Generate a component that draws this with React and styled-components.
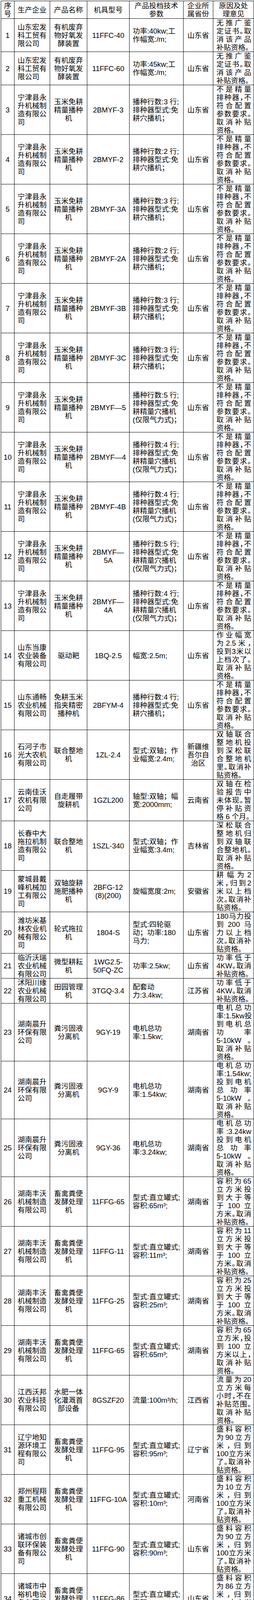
import React from "react";
import styled, { createGlobalStyle } from "styled-components";

const GlobalStyle = createGlobalStyle`
  html, body {
    margin: 0;
    padding: 0;
    background: #fff;
    overflow-x: hidden;
  }
  body {
    font-family: "Liberation Sans", "Noto Sans CJK SC", sans-serif;
    color: #000;
  }
`;

const Page = styled.div`
  width: 649px;
  padding: 2px 0 0 2px;
  box-sizing: border-box;
  overflow: hidden;
`;

const Table = styled.table`
  width: 646px;
  border-collapse: collapse;
  table-layout: fixed;
  font-size: 18.5px;
  line-height: 21px;
`;

const Head = styled.th`
  border: 1px solid #000;
  padding: 1px 0;
  font-weight: 400;
  text-align: center;
  vertical-align: middle;
  white-space: nowrap;
  overflow: hidden;
`;

const Cell = styled.td`
  border: 1px solid #000;
  padding: 0;
  vertical-align: middle;
  white-space: nowrap;
  overflow: hidden;
`;

const NumCell = styled(Cell)`
  text-align: center;
`;

const CompanyCell = styled(Cell)`
  text-align: left;
  padding: 0 4px 0 8px;
`;

const ProductCell = styled(Cell)`
  text-align: center;
`;

const ModelCell = styled(Cell)`
  text-align: center;
  padding: 0 2px;
`;

const ParamCell = styled(Cell)`
  text-align: left;
  padding: 0 4px 0 8px;
`;

const ProvinceCell = styled(Cell)`
  text-align: center;
`;

const ReasonCell = styled(Cell)`
  padding: 0 6px 0 8px;
  font-feature-settings: "halt";
`;

const Spread = styled.div`
  display: flex;
  justify-content: space-between;
`;

const Tail = styled.div`
  text-align: left;
`;

const NJ = ["宁津县永", "升机械制", "造有限公", "司"];
const CORN = ["玉米免耕", "精量播种", "机"];
const NOT_PRECISE = ["不是精量", "排种器，不", "符合配置", "参数要求。", "取消补贴", "资格。"];
const NO_CERT = ["无推广鉴", "定证书。取", "消该产品", "补贴资格。"];
const HN_CS = ["湖南晨升", "环保有限", "公司"];
const HN_FW = ["湖南丰沃", "机械制造", "有限公司"];
const FERM = ["畜禽粪便", "发酵处理", "机"];
const JBY = ["山东金碧", "源环保科", "技有限公", "司"];
const SMART = ["智能高温", "好氧发酵", "设备"];

const seed = (n) => [`播种行数:${n} 行;`, "排种器型式:免", "耕穴播机；"];
const seedAir = (n) => [`播种行数:${n} 行;`, "排种器型式:免", "耕精量穴播机", "(仅限气力式)；"];
const tank = (v) => ["型式:直立罐式;", `容积:${v}m³;`];
const tankReason = (v) => [`容积为 ${v}`, "立方米投", "到大于等", "于 100 立", "方米。取消", "补贴资格。"];
const boxReason = (v, sep = "。") => ["盛料容积", `为 ${v} 立方`, "米， 归到", "100立方米", `了${sep}取消补`, "贴资格。"];
const jbyReason = (v) => ["直立罐式；", "容积：为", `${v}m3， 投`, "到容积为", "100立方米", "档次，取消", "补贴资格。"];

const rows = [
  { company: ["山东宏发", "科工贸有", "限公司"], product: ["有机废弃", "物好氧发", "酵装置"], model: ["11FFC-40"], param: ["功率:40kw;工", "作幅宽:/m;"], province: ["山东省"], reason: NO_CERT },
  { company: ["山东宏发", "科工贸有", "限公司"], product: ["有机废弃", "物好氧发", "酵装置"], model: ["11FFC-60"], param: ["功率:45kw;工", "作幅宽:/m;"], province: ["山东省"], reason: NO_CERT },
  { company: NJ, product: CORN, model: ["2BMYF-3"], param: seed(3), province: ["山东省"], reason: NOT_PRECISE },
  { company: NJ, product: CORN, model: ["2BMYF-2"], param: seed(2), province: ["山东省"], reason: NOT_PRECISE },
  { company: NJ, product: CORN, model: ["2BMYF-3A"], param: seed(3), province: ["山东省"], reason: NOT_PRECISE },
  { company: NJ, product: CORN, model: ["2BMYF-2A"], param: seed(2), province: ["山东省"], reason: NOT_PRECISE },
  { company: NJ, product: CORN, model: ["2BMYF-3B"], param: seed(3), province: ["山东省"], reason: NOT_PRECISE },
  { company: NJ, product: CORN, model: ["2BMYF-3C"], param: seed(3), province: ["山东省"], reason: NOT_PRECISE },
  { company: NJ, product: CORN, model: ["2BMYF—5"], param: seedAir(5), province: ["山东省"], reason: NOT_PRECISE },
  { company: NJ, product: CORN, model: ["2BMYF—4"], param: seedAir(4), province: ["山东省"], reason: NOT_PRECISE },
  { company: NJ, product: CORN, model: ["2BMYF-4B"], param: seedAir(4), province: ["山东省"], reason: NOT_PRECISE },
  { company: NJ, product: CORN, model: ["2BMYF—", "5A"], param: seedAir(5), province: ["山东省"], reason: NOT_PRECISE },
  { company: NJ, product: CORN, model: ["2BMYF—", "4A"], param: seedAir(4), province: ["山东省"], reason: NOT_PRECISE },
  { company: ["山东当康", "农业装备", "有限公司"], product: ["驱动耙"], model: ["1BQ-2.5"], param: ["幅宽:2.5m;"], province: ["山东省"], reason: ["作业幅宽", "为 2.5 米，", "投到3米以", "上档次了。", "取消补贴", "资格。"] },
  { company: ["山东通畅", "农业机械", "有限公司"], product: ["免耕玉米", "指夹精密", "播种机"], model: ["2BFYM-4"], param: seed(4), province: ["山东省"], reason: NOT_PRECISE },
  { company: ["石河子市", "光大农机", "有限公司"], product: ["联合整地", "机"], model: ["1ZL-2.4"], param: ["型式:双轴；作", "业幅宽:2.4m;"], province: ["新疆维", "吾尔自", "治区"], reason: ["双轴联合", "整地机投", "到深松联", "合整地机", "里。取消补", "贴资格。"] },
  { company: ["云南佳沃", "农机有限", "公司"], product: ["自走履带", "旋耕机"], model: ["1GZL200"], param: ["轴型:双轴；幅", "宽:2000mm;"], province: ["云南省"], reason: ["双轴在检", "验报告中", "未体现。暂", "停补贴资", "格 6 个月。"] },
  { company: ["长春中大", "拖拉机制", "造有限公", "司"], product: ["联合整地", "机"], model: ["1SZL-340"], param: ["型式:双轴；作", "业幅宽:3.4m;"], province: ["吉林省"], reason: ["深松联合", "整地机归", "到双轴联", "合整地机。", "取消补贴", "资格。"] },
  { company: ["蒙城县戴", "峰机械加", "工有限公", "司"], product: ["双轴旋耕", "施肥播种", "机"], model: ["2BFG-12", "(8)(200)"], param: ["旋幅宽度:2m;"], province: ["安徽省"], reason: ["耕幅为 2", "米，归到 2", "米以上档", "次。取消补", "贴资格。"] },
  { company: ["潍坊米基", "林农业机", "械有限公", "司"], product: ["轮式拖拉", "机"], model: ["1804-S"], param: ["型式:四轮驱", "动；功率:180", "马力;"], province: ["山东省"], reason: ["180马力投", "到 200 马", "力以上档", "次。取消补", "贴资格。"] },
  { company: ["临沂沃瑞", "农业机械", "有限公司"], product: ["微型耕耘", "机"], model: ["1WG2.5-", "50FQ-ZC"], param: ["功率:2.5kw;"], province: ["山东省"], reason: ["功率低于", "4KW。取消", "补贴资格。"] },
  { company: ["沭阳川缘", "农业机械", "有限公司"], product: ["田园管理", "机"], model: ["3TGQ-3.4"], param: ["配套动", "力:3.4kw;"], province: ["江苏省"], reason: ["功率低于", "4KW。取消", "补贴资格。"] },
  { company: HN_CS, product: ["粪污固液", "分离机"], model: ["9GY-19"], param: ["电机总功", "率:1.5kw;"], province: ["湖南省"], reason: ["电机总功", "率:1.5kw投", "到电机总", "功率", "5-10kW 。", "取消补贴", "资格。"] },
  { company: HN_CS, product: ["粪污固液", "分离机"], model: ["9GY-9"], param: ["电机总功", "率:1.54kw;"], province: ["湖南省"], reason: ["电机总功", "率 :1.54kw;", "投到电机", "总功率", "5-10kW 。", "取消补贴", "资格。"] },
  { company: HN_CS, product: ["粪污固液", "分离机"], model: ["9GY-36"], param: ["电机总功", "率:3.24kw;"], province: ["湖南省"], reason: ["电机总功", "率 :3.24kw", "投到电机", "总功率", "5-10kW 。", "取消补贴", "资格。"] },
  { company: HN_FW, product: FERM, model: ["11FFG-65"], param: tank(65), province: ["湖南省"], reason: tankReason(65) },
  { company: HN_FW, product: FERM, model: ["11FFG-11"], param: tank(11), province: ["湖南省"], reason: tankReason(11) },
  { company: HN_FW, product: FERM, model: ["11FFG-25"], param: tank(25), province: ["湖南省"], reason: tankReason(25) },
  { company: HN_FW, product: FERM, model: ["11FFG-65"], param: tank(65), province: ["湖南省"], reason: ["容积为 65", "立方米，投", "到 100 立", "方米以上，", "取消补贴", "资格。"] },
  { company: ["江西沃邦", "农业科技", "有限公司"], product: ["水肥一体", "化灌溉首", "部设备"], model: ["8GSZF20"], param: ["流量:100m³/h;"], province: ["江西省"], reason: ["流量为 20", "立方米每", "小时，不在", "补贴范围。", "取消补贴", "资格。"] },
  { company: ["辽宁地知", "源环境工", "程有限公", "司"], product: FERM, model: ["11FFG-95"], param: tank(95), province: ["辽宁省"], reason: boxReason(90) },
  { company: ["郑州程翔", "重工机械", "有限公司"], product: FERM, model: ["11FFG-10A"], param: tank(10), province: ["河南省"], reason: boxReason(10) },
  { company: ["诸城市创", "联环保装", "备有限公", "司"], product: FERM, model: ["11FFG-90"], param: tank(90), province: ["山东省"], reason: boxReason(90) },
  { company: ["诸城市中", "裕机电设", "备有限公", "司"], product: FERM, model: ["11FFG-86"], param: tank(86), province: ["山东省"], reason: boxReason(86, "，") },
  { company: JBY, product: SMART, model: ["11FFG-32"], param: tank(32), province: ["山东省"], reason: ["直立罐式；", "容积:32m3", "投到容积", "100立方米", "档次，取消", "补贴资格。"] },
  { company: JBY, product: SMART, model: ["11FFG-89"], param: tank(89), province: ["山东省"], reason: jbyReason(89) },
  { company: JBY, product: SMART, model: ["11FFG-70"], param: tank(70), province: ["山东省"], reason: jbyReason(70) },
];

function Lines({ lines }) {
  return lines.map((line, i) => (
    <React.Fragment key={i}>
      {i > 0 && <br />}
      {line}
    </React.Fragment>
  ));
}

const tokens = (text) => text.match(/[!-~³]+|\S/g) || [];

function Reason({ lines }) {
  return lines.map((line, i) =>
    i < lines.length - 1 ? (
      <Spread key={i}>
        {tokens(line).map((t, j) => (
          <span key={j}>{t}</span>
        ))}
      </Spread>
    ) : (
      <Tail key={i}>{line}</Tail>
    )
  );
}

export default function App() {
  return (
    <Page>
      <GlobalStyle />
      <Table>
        <colgroup>
          <col style={{ width: 34 }} />
          <col style={{ width: 91 }} />
          <col style={{ width: 95 }} />
          <col style={{ width: 108 }} />
          <col style={{ width: 138 }} />
          <col style={{ width: 76 }} />
          <col style={{ width: 104 }} />
        </colgroup>
        <thead>
          <tr>
            <Head><Lines lines={["序", "号"]} /></Head>
            <Head>生产企业</Head>
            <Head>产品名称</Head>
            <Head>机具型号</Head>
            <Head><Lines lines={["产品投档技术", "参数"]} /></Head>
            <Head><Lines lines={["企业所", "属省份"]} /></Head>
            <Head><Lines lines={["原因及处", "理意见"]} /></Head>
          </tr>
        </thead>
        <tbody>
          {rows.map((row, i) => (
            <tr key={i}>
              <NumCell>{i + 1}</NumCell>
              <CompanyCell><Lines lines={row.company} /></CompanyCell>
              <ProductCell><Lines lines={row.product} /></ProductCell>
              <ModelCell><Lines lines={row.model} /></ModelCell>
              <ParamCell><Lines lines={row.param} /></ParamCell>
              <ProvinceCell><Lines lines={row.province} /></ProvinceCell>
              <ReasonCell><Reason lines={row.reason} /></ReasonCell>
            </tr>
          ))}
        </tbody>
      </Table>
    </Page>
  );
}
